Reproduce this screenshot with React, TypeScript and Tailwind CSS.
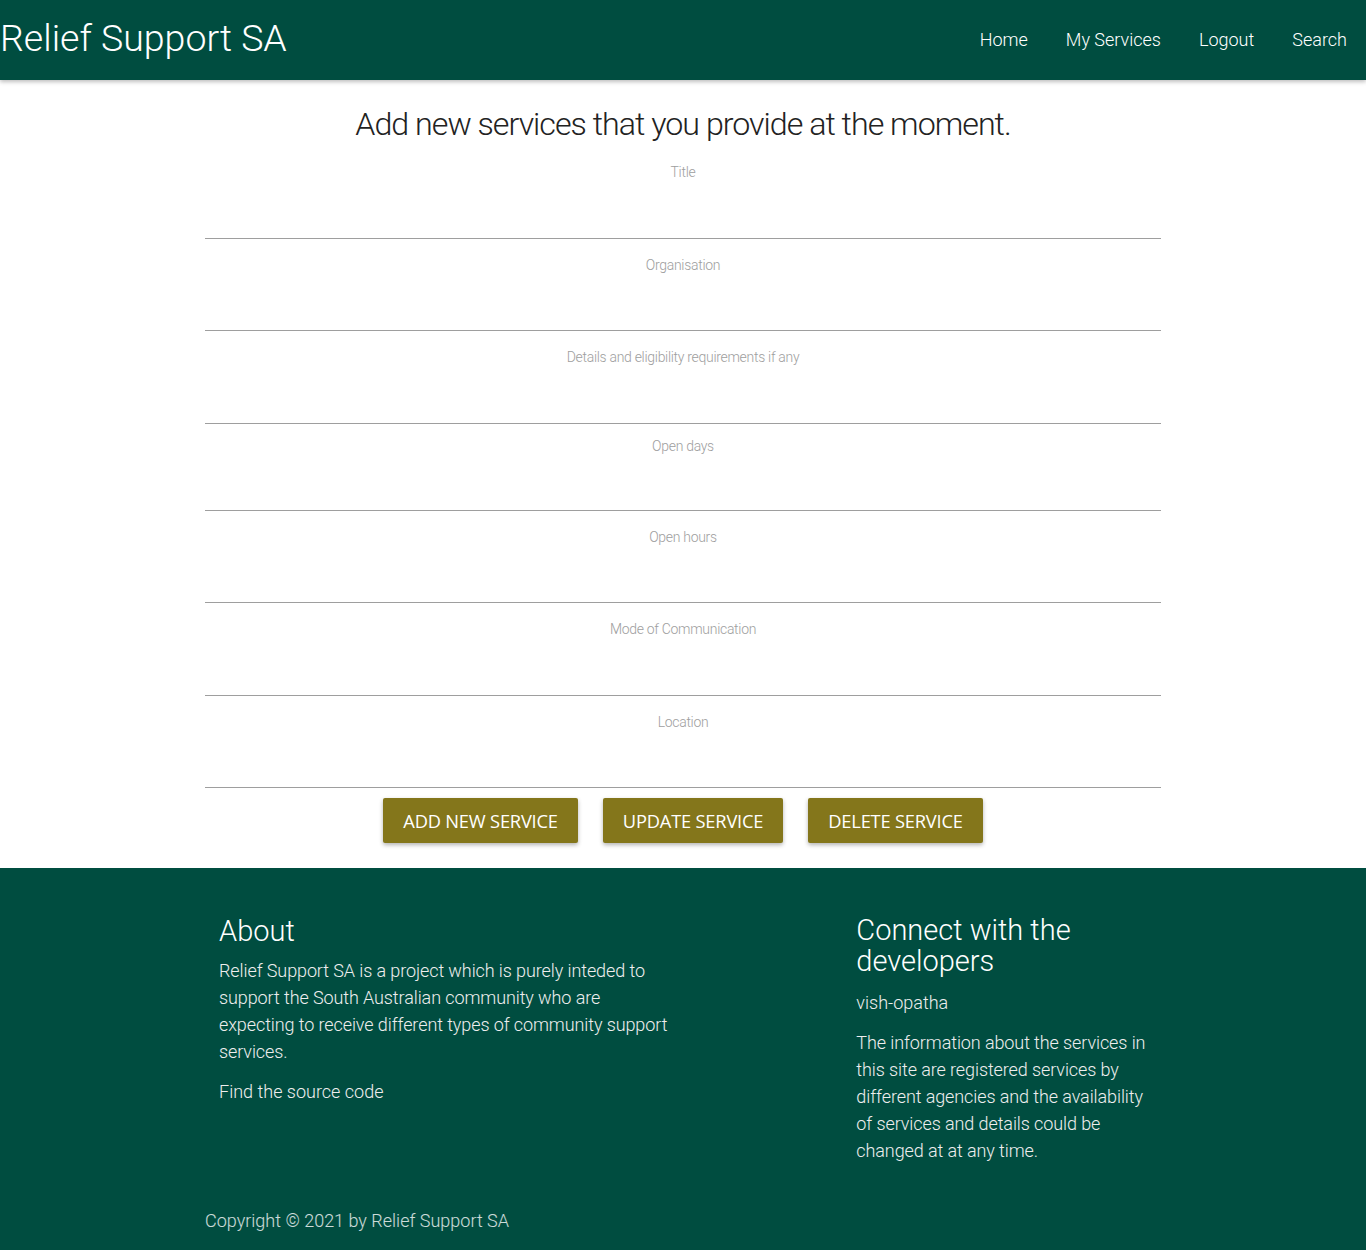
import React from "react";

const fields = [
  { label: "Title", h: "h-[93px]", pt: "pt-[14px]" },
  { label: "Organisation", h: "h-[92px]", pt: "pt-[14px]" },
  { label: "Details and eligibility requirements if any", h: "h-[93px]", pt: "pt-[14px]" },
  { label: "Open days", h: "h-[87px]", pt: "pt-[10px]" },
  { label: "Open hours", h: "h-[92px]", pt: "pt-[14px]" },
  { label: "Mode of Communication", h: "h-[93px]", pt: "pt-[14px]" },
  { label: "Location", h: "h-[92px]", pt: "pt-[14px]" },
];

const navLinks = ["Home", "My Services", "Logout", "Search"];

export default function App() {
  return (
    <div className="min-h-screen bg-white font-['Roboto_Light','Roboto',sans-serif] font-light">
      {/* top bar */}
      <nav className="h-20 bg-[#004d40] flex items-center justify-between text-white shadow-[0_2px_4px_rgba(0,0,0,0.25)] relative z-10">
        <a className="text-[37.5px] leading-none -mt-[2px]">Relief Support SA</a>
        <ul className="flex items-center">
          {navLinks.map((l) => (
            <li key={l} className="px-[19px] text-[18px] leading-none">
              {l}
            </li>
          ))}
        </ul>
      </nav>

      <main className="w-[956px] mx-auto pt-[22px]">
        <h1 className="text-center text-[32.2px] leading-[44px] text-[#222] tracking-[-1px]">
          Add new services that you provide at the moment.
        </h1>
        <form>
          {fields.map((f) => (
            <div
              key={f.label}
              className={`${f.h} ${f.pt} border-b border-[#9e9e9e] text-center`}
            >
              <label className="text-[14px] leading-5 text-[#9e9e9e] tracking-[-0.3px]">
                {f.label}
              </label>
            </div>
          ))}
          <div className="flex justify-center gap-[25px] pt-[10px] pb-[25px]">
            {["ADD NEW SERVICE", "UPDATE SERVICE", "DELETE SERVICE"].map((b) => (
              <button
                key={b}
                type="button"
                className="h-[45px] px-5 bg-[#84761b] text-white rounded-[2px] font-['Open_Sans',sans-serif] font-normal text-[18.3px] tracking-[-0.2px] shadow-[0_2px_4px_rgba(0,0,0,0.3)]"
              >
                {b}
              </button>
            ))}
          </div>
        </form>
      </main>

      <footer className="bg-[#004d40] text-[#eeeeee]">
        <div className="w-[956px] mx-auto pt-[47px] grid grid-cols-12">
          <div className="col-span-6 pl-[14px] pr-[4px]">
            <h5 className="text-[29px] leading-[32px] text-white">About</h5>
            <p className="mt-[10px] text-[18px] leading-[27px] tracking-[-0.1px]">
              Relief Support SA is a project which is purely inteded to support
              the South Australian community who are expecting to receive
              different types of community support services.
            </p>
            <p className="mt-[13px] text-[18px] leading-[27px]">Find the source code</p>
          </div>
          <div className="col-start-9 col-span-4 pl-[14px] pr-0">
            <h5 className="text-[29px] leading-[31px] text-white">
              Connect with the developers
            </h5>
            <p className="mt-[12px] text-[18px] leading-[27px]">vish-opatha</p>
            <p className="mt-[13px] text-[18px] leading-[27px] tracking-[-0.1px]">
              The information about the services in this site are registered
              services by different agencies and the availability of services
              and details could be changed at at any time.
            </p>
          </div>
        </div>
        <div className="w-[956px] mx-auto pt-[43px] pb-[16px] text-[18px] leading-[27px] text-white/80">
          Copyright © 2021 by Relief Support SA
        </div>
      </footer>
    </div>
  );
}
